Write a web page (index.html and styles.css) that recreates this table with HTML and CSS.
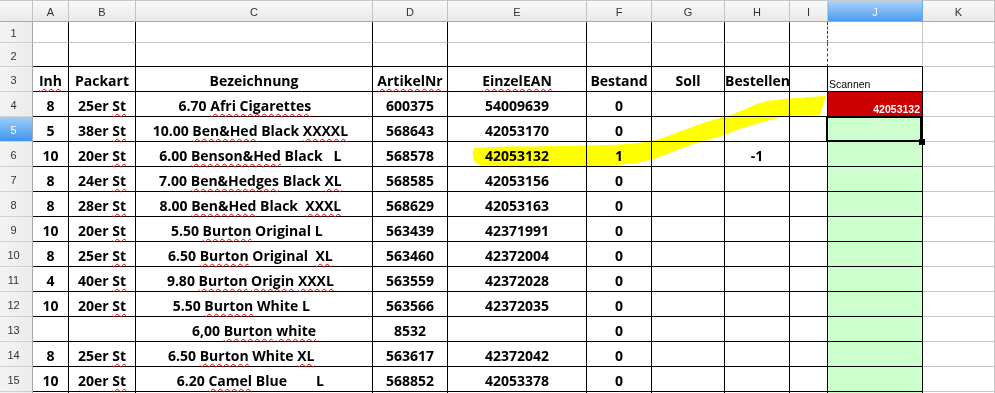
FILE: index.html
```html
<!DOCTYPE html>
<html lang="de">
<head>
<meta charset="utf-8">
<title>Bestand</title>
<link rel="stylesheet" href="styles.css">
</head>
<body>
<div class="sheet">
  <div class="grid">
    <div class="hdr"></div><div class="hdr">A</div><div class="hdr">B</div><div class="hdr">C</div><div class="hdr">D</div><div class="hdr">E</div><div class="hdr">F</div><div class="hdr">G</div><div class="hdr">H</div><div class="hdr">I</div><div class="hdr hdr-sel">J</div><div class="hdr">K</div>

    <div class="rh">1</div><div class="c vb"></div><div class="c vb"></div><div class="c vb"></div><div class="c vb"></div><div class="c vb"></div><div class="c vb"></div><div class="c vb"></div><div class="c vb"></div><div class="c dash"></div><div class="c"></div><div class="c"></div>

    <div class="rh">2</div><div class="c vb hb"></div><div class="c vb hb"></div><div class="c vb hb"></div><div class="c vb hb"></div><div class="c vb hb"></div><div class="c vb hb"></div><div class="c vb hb"></div><div class="c vb hb"></div><div class="c dash hb"></div><div class="c hb"></div><div class="c"></div>

    <div class="rh">3</div><div class="c t"><span class="sp">Inh</span></div><div class="c t">Packart</div><div class="c t">Bezeichnung</div><div class="c t"><span class="sp">ArtikelNr</span></div><div class="c t"><span class="sp">EinzelEAN</span></div><div class="c t">Bestand</div><div class="c t">Soll</div><div class="c t">Bestellen</div><div class="c t"></div><div class="c t scan">Scannen</div><div class="c"></div>

    <div class="rh">4</div><div class="c t">8</div><div class="c t">25er <span class="sp">St</span></div><div class="c t">6.70 <span class="sp">Afri Cigarettes</span>     </div><div class="c t">600375</div><div class="c t">54009639</div><div class="c t">0</div><div class="c t"></div><div class="c t"></div><div class="c t"></div><div class="c t red">42053132</div><div class="c"></div>

    <div class="rh rh-sel">5</div><div class="c t">5</div><div class="c t">38er <span class="sp">St</span></div><div class="c t">10.00 <span class="sp">Ben&amp;Hed</span> Black <span class="sp">XXXXL</span>  </div><div class="c t">568643</div><div class="c t">42053170</div><div class="c t">0</div><div class="c t"></div><div class="c t"></div><div class="c t"></div><div class="c t green cur"></div><div class="c"></div>

    <div class="rh">6</div><div class="c t">10</div><div class="c t">20er <span class="sp">St</span></div><div class="c t">6.00 <span class="sp">Benson&amp;Hed</span> Black   L  </div><div class="c t">568578</div><div class="c t">42053132</div><div class="c t">1</div><div class="c t"></div><div class="c t">-1</div><div class="c t"></div><div class="c t green"></div><div class="c"></div>

    <div class="rh">7</div><div class="c t">8</div><div class="c t">24er <span class="sp">St</span></div><div class="c t">7.00 <span class="sp">Ben&amp;Hedges</span> Black <span class="sp">XL</span>  </div><div class="c t">568585</div><div class="c t">42053156</div><div class="c t">0</div><div class="c t"></div><div class="c t"></div><div class="c t"></div><div class="c t green"></div><div class="c"></div>

    <div class="rh">8</div><div class="c t">8</div><div class="c t">28er <span class="sp">St</span></div><div class="c t">8.00 <span class="sp">Ben&amp;Hed</span> Black  <span class="sp">XXXL</span>  </div><div class="c t">568629</div><div class="c t">42053163</div><div class="c t">0</div><div class="c t"></div><div class="c t"></div><div class="c t"></div><div class="c t green"></div><div class="c"></div>

    <div class="rh">9</div><div class="c t">10</div><div class="c t">20er <span class="sp">St</span></div><div class="c t">5.50 <span class="sp">Burton</span> Original L    </div><div class="c t">563439</div><div class="c t">42371991</div><div class="c t">0</div><div class="c t"></div><div class="c t"></div><div class="c t"></div><div class="c t green"></div><div class="c"></div>

    <div class="rh">10</div><div class="c t">8</div><div class="c t">25er <span class="sp">St</span></div><div class="c t">6.50 <span class="sp">Burton</span> Original  <span class="sp">XL</span>  </div><div class="c t">563460</div><div class="c t">42372004</div><div class="c t">0</div><div class="c t"></div><div class="c t"></div><div class="c t"></div><div class="c t green"></div><div class="c"></div>

    <div class="rh">11</div><div class="c t">4</div><div class="c t">40er <span class="sp">St</span></div><div class="c t">9.80 <span class="sp">Burton</span> <span class="sp">Origin</span> <span class="sp">XXXL</span>  </div><div class="c t">563559</div><div class="c t">42372028</div><div class="c t">0</div><div class="c t"></div><div class="c t"></div><div class="c t"></div><div class="c t green"></div><div class="c"></div>

    <div class="rh">12</div><div class="c t">10</div><div class="c t">20er <span class="sp">St</span></div><div class="c t">5.50 <span class="sp">Burton</span> White L       </div><div class="c t">563566</div><div class="c t">42372035</div><div class="c t">0</div><div class="c t"></div><div class="c t"></div><div class="c t"></div><div class="c t green"></div><div class="c"></div>

    <div class="rh">13</div><div class="c t"></div><div class="c t"></div><div class="c t">6,00 <span class="sp">Burton</span> <span class="sp">white</span></div><div class="c t">8532</div><div class="c t"></div><div class="c t">0</div><div class="c t"></div><div class="c t"></div><div class="c t"></div><div class="c t green"></div><div class="c"></div>

    <div class="rh">14</div><div class="c t">8</div><div class="c t">25er <span class="sp">St</span></div><div class="c t">6.50 <span class="sp">Burton</span> White <span class="sp">XL</span>       </div><div class="c t">563617</div><div class="c t">42372042</div><div class="c t">0</div><div class="c t"></div><div class="c t"></div><div class="c t"></div><div class="c t green"></div><div class="c"></div>

    <div class="rh">15</div><div class="c t">10</div><div class="c t">20er <span class="sp">St</span></div><div class="c t">6.20 <span class="sp">Camel</span> Blue        L  </div><div class="c t">568852</div><div class="c t">42053378</div><div class="c t">0</div><div class="c t"></div><div class="c t"></div><div class="c t"></div><div class="c t green"></div><div class="c"></div>

    <div class="rh"></div><div class="c t"></div><div class="c t"></div><div class="c t"></div><div class="c t"></div><div class="c t"></div><div class="c t"></div><div class="c t"></div><div class="c t"></div><div class="c t"></div><div class="c t green"></div><div class="c"></div>
  </div>
  <svg class="marker" width="995" height="393" viewBox="0 0 995 393" aria-hidden="true">
    <path d="M475,148 C490,146.5 510,146.5 527,146.5 L587,145.5 C615,145 635,144 650,141.5 C660,139 668,136 677,132.5 C684,130 690,128 693,126.5 C705,122 715,119 725,117 C732,114 738,112 743,110 C750,107 755,104.5 760,103 C767,101 772,100 777,100 C783,99 788,98.5 793,98.3 C805,97.5 815,96.5 826,96 L820,115.5 C810,115.5 800,115 793,115 C782,117 770,120 760,123 C753,125 748,126.5 743,128 C736,130 730,132.5 725,135 C715,138 703,141 693,144 C688,146 683,148 677,150 C671,152 666,155 660,156.7 C656,158 653,159 650,160 C643,162 635,163.5 627,164 C610,166 598,166.5 587,166.7 C565,167 545,167.7 527,167.7 C510,167.5 495,166 480,165 C472,164 471,150 475,148 Z" fill="#ffff00"/>
  </svg>
</div>
</body>
</html>
```

FILE: styles.css
```css
html, body {
  margin: 0;
  padding: 0;
  background: #ffffff;
  overflow: hidden;
}

.sheet {
  position: relative;
  width: 995px;
  height: 393px;
  overflow: hidden;
}

.grid {
  display: grid;
  grid-template-columns: 33px 36px 67px 237px 75px 139px 65px 73px 65px 38px 95px 72px;
  grid-template-rows: 22px 21px 24px 25px repeat(13, 25px);
  font-family: "Open Sans", "Liberation Sans", sans-serif;
  font-weight: 700;
  font-size: 14px;
  color: #000;
}

.grid > div {
  box-sizing: border-box;
}

.hdr {
  background: linear-gradient(#fafafa, #e9e9e9);
  border-top: 1px solid #c9c9c9;
  border-right: 1px solid #c4c4c4;
  border-bottom: 1px solid #a9a9a9;
  font: 400 11px "Liberation Sans", sans-serif;
  color: #333;
  display: flex;
  align-items: center;
  justify-content: center;
  padding-top: 2px;
}

.hdr-sel {
  background: linear-gradient(#a9d3fb, #4a9cee);
  border-right-color: #6aa8e6;
  color: #fff;
}

.rh {
  background: linear-gradient(90deg, #f4f4f4, #ebebeb);
  border-right: 1px solid #a6a6a6;
  border-bottom: 1px solid #d0d0d0;
  font: 400 11px "Liberation Sans", sans-serif;
  color: #333;
  display: flex;
  align-items: center;
  justify-content: center;
  padding-right: 5px;
  padding-top: 2px;
}

.rh-sel {
  background: linear-gradient(#9fcdf9, #3f95ec);
  color: #fff;
}

.c {
  border-right: 1px solid #c6c6c6;
  border-bottom: 1px solid #c6c6c6;
  text-align: center;
  line-height: 18px;
  padding-top: 5px;
  white-space: pre;
  overflow: visible;
}

.vb {
  border-right-color: #000;
}

.hb {
  border-bottom-color: #000;
}

.dash {
  border-right: 1px dashed #2e2e99;
}

.t {
  border-right-color: #000;
  border-bottom-color: #000;
}

.sp {
  text-decoration: underline wavy #e00000;
  text-decoration-thickness: 1px;
  text-underline-offset: 2px;
  text-decoration-skip-ink: none;
}

.scan {
  text-align: left;
  font: 400 10.5px/14px "Liberation Sans", sans-serif;
  padding-left: 1px;
  padding-top: 10px;
}

.red {
  background: #cc0000;
  color: #fff;
  text-align: right;
  font: 700 10.5px/14px "Liberation Sans", sans-serif;
  padding-right: 2px;
  padding-top: 10px;
}

.green {
  background: #ccffcc;
}

.cur {
  position: relative;
}

.cur::before {
  content: "";
  position: absolute;
  top: -1px;
  left: -2px;
  right: 0;
  bottom: -1px;
  border: 2px solid #000;
}

.cur::after {
  content: "";
  position: absolute;
  width: 6px;
  height: 6px;
  right: -3px;
  bottom: -4px;
  background: #000;
}

.marker {
  position: absolute;
  left: 0;
  top: 0;
  pointer-events: none;
  mix-blend-mode: multiply;
}
```
